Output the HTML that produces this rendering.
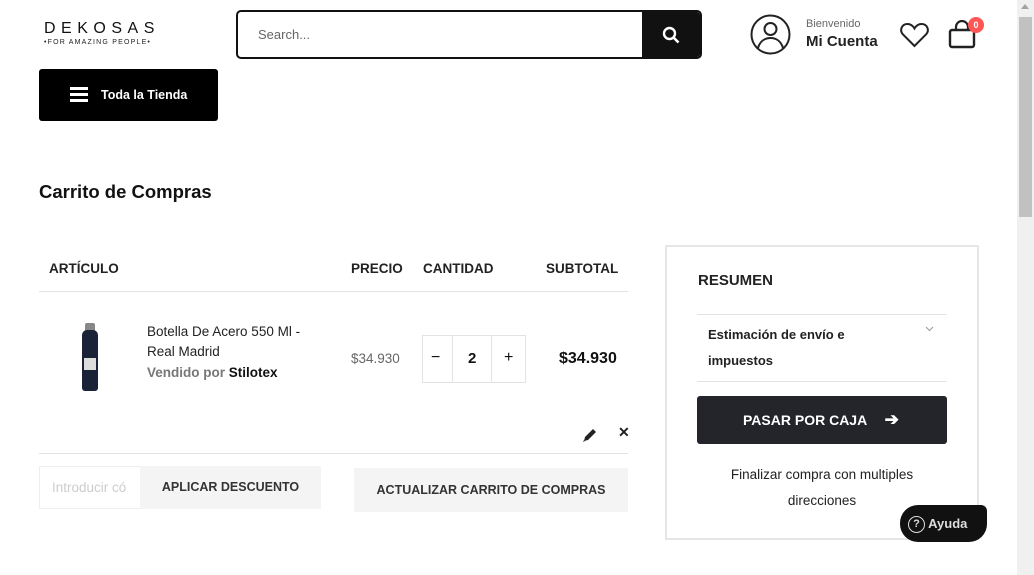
<!DOCTYPE html>
<html><head><meta charset="utf-8"><style>
*{box-sizing:border-box;margin:0;padding:0}
body{width:1034px;height:575px;overflow:hidden;background:#fff;font-family:"Liberation Sans",sans-serif;color:#111;position:relative}
.a{position:absolute}
.sb{left:1017px;top:0;width:17px;height:575px;background:#f0f0f0}
.th{font-size:13.5px;font-weight:bold;color:#222}
</style></head><body>
<div class="a" style="left:44px;top:20px;font-size:16px;letter-spacing:5.5px;color:#111">DEKOSAS</div>
<div class="a" style="left:44px;top:39px;font-size:7px;letter-spacing:1.2px;color:#222;white-space:nowrap">•FOR AMAZING PEOPLE•</div>
<div class="a" style="left:236px;top:10px;width:466px;height:49px;border:2px solid #111;border-radius:5px;overflow:hidden">
<div class="a" style="left:20px;top:15px;font-size:13px;color:#666">Search...</div>
<div class="a" style="right:0;top:0;width:58px;height:45px;background:#111"><svg class="a" style="left:20px;top:14px" width="18" height="18" viewBox="0 0 18 18"><circle cx="7.5" cy="7.5" r="5.5" stroke="#fff" stroke-width="2.4" fill="none"/><path d="M11.5 11.5l5 5" stroke="#fff" stroke-width="2.6"/></svg></div></div>
<svg class="a" style="left:750px;top:14px" width="41" height="41" viewBox="0 0 41 41"><circle cx="20.5" cy="20.5" r="19" fill="none" stroke="#222" stroke-width="2"/><circle cx="20.5" cy="15" r="6" fill="none" stroke="#222" stroke-width="2"/><path d="M8 34c2-7 7-10 12.5-10s10.5 3 12.5 10" fill="none" stroke="#222" stroke-width="2"/></svg>
<div class="a" style="left:806px;top:18px;font-size:11px;color:#666">Bienvenido</div>
<div class="a" style="left:806px;top:33px;font-size:15px;font-weight:bold;color:#222">Mi Cuenta</div>
<svg class="a" style="left:900px;top:22px" width="29" height="26" viewBox="0 0 29 26"><path d="M14.5 24L3 12.5C-1 8 2 2 7.5 2c3 0 5.5 2 7 4.5C16 4 18.5 2 21.5 2 27 2 30 8 26 12.5z" fill="none" stroke="#222" stroke-width="2"/></svg>
<svg class="a" style="left:948px;top:20px" width="29" height="29" viewBox="0 0 29 29"><rect x="2" y="10" width="24" height="17" rx="2" fill="none" stroke="#222" stroke-width="2.4"/><path d="M8 10V7a6 6 0 0 1 12 0v3" fill="none" stroke="#222" stroke-width="2.2"/></svg>
<div class="a" style="left:968px;top:17px;width:16px;height:16px;border-radius:50%;background:#f55;color:#fff;font-size:9px;font-weight:bold;text-align:center;line-height:16px">0</div>
<div class="a" style="left:39px;top:69px;width:179px;height:52px;background:#000;border-radius:3px">
<div class="a" style="left:31px;top:18px;width:18px;height:3px;background:#fff;box-shadow:0 6px 0 #fff,0 12px 0 #fff"></div>
<div class="a" style="left:62px;top:19px;color:#fff;font-size:12.5px;font-weight:bold">Toda la Tienda</div></div>
<div class="a" style="left:39px;top:181px;font-size:18.5px;font-weight:bold;color:#111">Carrito de Compras</div>
<div class="a th" style="left:49px;top:261px">ARTÍCULO</div>
<div class="a th" style="left:351px;top:261px">PRECIO</div>
<div class="a th" style="left:423px;top:261px">CANTIDAD</div>
<div class="a th" style="left:546px;top:261px">SUBTOTAL</div>
<div class="a" style="left:39px;top:291px;width:589px;height:1px;background:#e3e3e3"></div>
<div class="a" style="left:85px;top:323px;width:10px;height:8px;background:#888;border-radius:2px 2px 0 0"></div>
<div class="a" style="left:82px;top:330px;width:16px;height:61px;background:#1a2238;border-radius:5px 5px 3px 3px"></div>
<div class="a" style="left:84px;top:358px;width:12px;height:12px;background:#ddd"></div>
<div class="a" style="left:147px;top:322px;font-size:13.5px;line-height:20px;color:#222">Botella De Acero 550 Ml -<br>Real Madrid</div>
<div class="a" style="left:147px;top:365px;font-size:13.5px;font-weight:bold;color:#777">Vendido por <span style="color:#111">Stilotex</span></div>
<div class="a" style="left:351px;top:351px;font-size:13.5px;color:#666">$34.930</div>
<div class="a" style="left:422px;top:335px;width:104px;height:48px;border:1px solid #e3e3e3"></div>
<div class="a" style="left:452px;top:335px;width:1px;height:48px;background:#e3e3e3"></div>
<div class="a" style="left:491px;top:335px;width:1px;height:48px;background:#e3e3e3"></div>
<div class="a" style="left:431px;top:349px;font-size:16px">−</div>
<div class="a" style="left:468px;top:350px;font-size:15px;font-weight:bold">2</div>
<div class="a" style="left:504px;top:349px;font-size:16px">+</div>
<div class="a" style="left:559px;top:350px;font-size:16px;font-weight:bold">$34.930</div>
<svg class="a" style="left:582px;top:427px" width="16" height="16" viewBox="0 0 16 16"><path d="M2 14l1-4 8-8 3 3-8 8z" fill="#222"/><path d="M1 15l2-1-1-1z" fill="#222"/></svg>
<div class="a" style="left:618px;top:424px;font-size:14px;font-weight:bold;color:#222">✕</div>
<div class="a" style="left:39px;top:453px;width:589px;height:1px;background:#e3e3e3"></div>
<div class="a" style="left:39px;top:466px;width:102px;height:43px;border:1px solid #eee;font-size:13.5px;color:#ccc;padding:13px 0 0 12px;overflow:hidden;white-space:nowrap">Introducir có</div>
<div class="a" style="left:140px;top:466px;width:181px;height:43px;background:#f4f4f4;font-size:12.5px;font-weight:bold;color:#333;text-align:center;line-height:43px">APLICAR DESCUENTO</div>
<div class="a" style="left:354px;top:468px;width:274px;height:44px;background:#f4f4f4;font-size:12.5px;font-weight:bold;color:#333;text-align:center;line-height:44px">ACTUALIZAR CARRITO DE COMPRAS</div>
<div class="a" style="left:665px;top:245px;width:314px;height:295px;border:2px solid #e6e6e6"></div>
<div class="a" style="left:698px;top:272px;font-size:15px;font-weight:bold;color:#222">RESUMEN</div>
<div class="a" style="left:697px;top:314px;width:250px;height:1px;background:#e3e3e3"></div>
<div class="a" style="left:708px;top:322px;font-size:13px;font-weight:bold;line-height:26px;color:#222">Estimación de envío e<br>impuestos</div>
<svg class="a" style="left:925px;top:326px" width="9" height="6" viewBox="0 0 9 6"><path d="M1 1l3.5 3.5L8 1" fill="none" stroke="#999" stroke-width="1"/></svg>
<div class="a" style="left:697px;top:381px;width:250px;height:1px;background:#e3e3e3"></div>
<div class="a" style="left:697px;top:396px;width:250px;height:48px;background:#23252a;border-radius:3px;color:#fff;font-size:14px;font-weight:bold;line-height:48px;padding-left:46px">PASAR POR CAJA <span style="margin-left:14px;font-size:17px">➔</span></div>
<div class="a" style="left:697px;top:462px;width:250px;text-align:center;font-size:13.5px;line-height:26px;color:#222">Finalizar compra con multiples<br>direcciones</div>
<div class="a" style="left:900px;top:505px;width:87px;height:37px;background:#111;border-radius:18px 6px 18px 18px;color:#ddd;font-size:13px;font-weight:bold;line-height:37px;padding-left:8px;white-space:nowrap"><span style="display:inline-block;width:17px;height:17px;border:1.5px solid #ddd;border-radius:50%;font-size:11px;line-height:14px;text-align:center;vertical-align:middle">?</span> Ayuda</div>
<div class="a sb"><div class="a" style="left:2px;top:17px;width:13px;height:200px;background:#c1c1c1"></div><div class="a" style="left:4px;top:4px;width:0;height:0;border:4px solid transparent;border-bottom:5px solid #a3a3a3;border-top:0"></div></div>
</body></html>
